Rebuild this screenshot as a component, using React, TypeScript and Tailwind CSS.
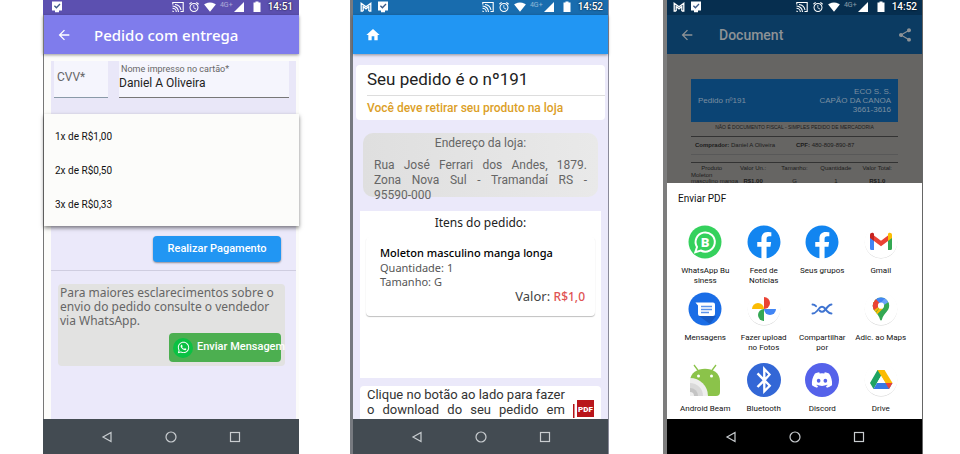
import React from "react";
import { MdAlarm, MdArrowBack, MdHome, MdShare, MdSignalCellular4Bar, MdSignalWifi4Bar } from "react-icons/md";
import { FaBluetoothB, FaDiscord, FaFacebook, FaWhatsapp } from "react-icons/fa";

function CheckMonitorIcon() {
  return (
    <svg viewBox="0 0 12 12" className="size-3">
      <path d="M1 0.5h10v9H8v1.8H4V9.5H1z" fill="#fff" />
      <path d="M3.4 4.8l2 2L9 3" fill="none" stroke="#3d5a86" strokeWidth="1.3" />
    </svg>
  );
}

function MailOutlineIcon() {
  return (
    <svg viewBox="0 0 12 12" className="size-3" fill="none" stroke="#fff" strokeWidth="1.3">
      <path d="M3.2 10H1.2V2.2L6 5.8l4.8-3.6V10H8.8M3.2 10V5.6L6 7.8l2.8-2.2V10" />
    </svg>
  );
}

function CastIcon() {
  return (
    <svg viewBox="0 0 12 12" className="mr-1 size-3" fill="none" stroke="#fff" strokeWidth="1.1">
      <path d="M.8 3.500V1.500h10.400v9H8.500" />
      <path d="M.5 5a6 6 0 0 1 6 6M.5 7.200A3.800 3.800 0 0 1 4.300 11M3 3.500A7 7 0 0 1 9 9" />
      <path d="M.5 9.500A1.500 1.500 0 0 1 2 11H.5z" fill="#fff" stroke="none" />
    </svg>
  );
}

function BatteryIcon() {
  return (
    <svg viewBox="0 0 8 12" className="mr-[7px] ml-1 h-3 w-2">
      <path d="M2.500 0.500h3V1.500H7.500V11H.5V1.500h2z" fill="#fff" />
    </svg>
  );
}

function StatusBar({ time, mail, className }: { time: string; mail?: boolean; className: string }) {
  return (
    <div className={`flex h-[15px] items-center pb-px text-white ${className}`}>
      <div className="flex flex-1 items-center gap-[5px]">
        {mail && <MailOutlineIcon />}
        <CheckMonitorIcon />
      </div>
      <div className="flex items-center">
        <CastIcon />
        <MdAlarm className="mr-1 size-3" />
        <MdSignalWifi4Bar className="mr-1 size-3" />
        <span className="mb-1 text-[7px] leading-none opacity-50">4G+</span>
        <MdSignalCellular4Bar className="mr-1 size-3" />
        <BatteryIcon />
        <span className="text-[10px] leading-3 font-medium [text-shadow:0_0_2px_#000]">{time}</span>
      </div>
    </div>
  );
}

function NavBar({ className }: { className: string }) {
  return (
    <nav className={`flex h-[35px] items-center justify-center gap-[52px] text-[#c9cdd0] ${className}`}>
      <button aria-label="Voltar">
        <svg viewBox="0 0 12 12" className="size-3" fill="none" stroke="currentColor" strokeWidth="1.2">
          <path d="M10 1.5v9L2 6z" />
        </svg>
      </button>
      <button aria-label="Início">
        <svg viewBox="0 0 12 12" className="size-3" fill="none" stroke="currentColor" strokeWidth="1.2">
          <circle cx="6" cy="6" r="5" />
        </svg>
      </button>
      <button aria-label="Recentes">
        <svg viewBox="0 0 12 12" className="size-3" fill="none" stroke="currentColor" strokeWidth="1.2">
          <rect x="1.5" y="1.5" width="9" height="9" />
        </svg>
      </button>
    </nav>
  );
}

function PaymentScreen() {
  return (
    <section className="mr-[51px] flex min-w-0 flex-col">
      <StatusBar time="14:51" className="bg-[#5c50b0] pr-[6px] pl-2" />
      <header className="relative z-10 flex h-[39px] items-center gap-[22px] border-l border-[#777] bg-[#7f7cec] pl-3 text-white shadow-[0_1px_3px_rgba(0,0,0,0.4)]">
        <button aria-label="Voltar">
          <MdArrowBack className="size-4" />
        </button>
        <h1 className="font-['Noto_Sans',sans-serif] text-[15px] leading-5 font-medium">Pedido com entrega</h1>
      </header>
      <main className="flex flex-1 flex-col border-l border-[#777] bg-[#fcfcfa]">
        <form className="mt-[7px] mr-[3px] ml-[7px] flex h-[53px] items-start gap-[11px] bg-[#e9e7f8] pr-[7px] pl-[3px]">
          <label className="flex h-[37px] w-[54px] items-center border-b border-[#8a9aa8] bg-[#f5f5fd] pb-1 pl-[3px] text-[#666]">
            <span className="sr-only">CVV</span>
            <input placeholder="CVV*" className="h-5 w-full text-[12px] leading-5 placeholder:text-[#666] focus:outline-none" />
          </label>
          <label className="flex h-[37px] min-w-0 flex-1 flex-col border-b border-[#777] bg-[#f5f5fd] text-[#222]">
            <span className="mt-[3px] pl-[2px] text-[9px] leading-[10px] text-[#666]">Nome impresso no cartão*</span>
            <input defaultValue="Daniel A Oliveira" className="h-[18px] w-full text-[12px] leading-[18px] focus:outline-none" />
          </label>
        </form>
        <div className="relative z-10 flex flex-col bg-[#fcfcfa] py-[5px] text-[10px] text-[#111] shadow-[0_2px_4px_rgba(0,0,0,0.5)]">
          <button className="h-[34px] pl-[11px] text-left">1x de R$1,00</button>
          <button className="h-[34px] pl-[11px] text-left">2x de R$0,50</button>
          <button className="h-[34px] pl-[11px] text-left">3x de R$0,33</button>
        </div>
        <div className="mr-[3px] ml-[7px] flex flex-1 flex-col bg-[#ebe9fa]">
          <div className="flex justify-end border-b border-[#cfcde0] pt-[10px] pr-[15px] pb-2">
            <button className="h-[26px] w-32 rounded-sm bg-[#2196f3] text-[11px] font-medium text-white shadow-[0_1px_2px_rgba(0,0,0,0.4)]">
              Realizar Pagamento
            </button>
          </div>
          <div className="mt-[13px] mr-[11px] ml-[7px] rounded bg-[#e2e2e1] pt-[2px] pb-1">
            <p className="pl-[2px] font-['Noto_Sans',sans-serif] text-[12px] leading-[14px] whitespace-nowrap text-[#666]">
              Para maiores esclarecimentos sobre o
              <br />
              envio do pedido consulte o vendedor
              <br />
              via WhatsApp.
            </p>
            <div className="mt-[5px] mr-1 flex justify-end">
              <button className="flex h-[29px] w-28 items-center gap-1 rounded bg-[#4caf50] pl-1 text-[11px] font-medium whitespace-nowrap text-white">
                <span className="flex size-5 shrink-0 items-center justify-center rounded-full bg-[#0bc143]">
                  <FaWhatsapp className="size-[13px]" />
                </span>
                Enviar Mensagem
              </button>
            </div>
          </div>
        </div>
      </main>
      <NavBar className="bg-[#434b52]" />
    </section>
  );
}

function OrderScreen() {
  return (
    <section className="mr-[54px] flex min-w-0 flex-col border-r border-l-[3px] border-r-[#8a8a99] border-l-[#777a80]">
      <StatusBar time="14:52" mail className="bg-[#186cae] pr-[5px] pl-[7px]" />
      <header className="relative z-10 flex h-[39px] items-center bg-[#2196f3] pl-3 text-white shadow-[0_1px_3px_rgba(0,0,0,0.4)]">
        <button aria-label="Início">
          <MdHome className="size-4" />
        </button>
      </header>
      <main className="flex flex-1 flex-col bg-[#ebe9fa] pt-[11px]">
        <div className="mx-[3px] rounded bg-white pl-[11px]">
          <h1 className="border-b border-[#ddd] pt-1 pb-[6px] text-[17px] leading-5 text-[#222]">Seu pedido é o nº191</h1>
          <p className="py-1 text-[12px] leading-4 font-medium text-[#dc9f28]">Você deve retirar seu produto na loja</p>
        </div>
        <div className="mx-[10px] mt-[13px] h-16 rounded-[10px] bg-linear-to-r from-[#dfdfdf] to-[#e9e9e9] px-[11px] text-[12px] text-[#666]">
          <h2 className="pt-[3px] text-center leading-[14px]">Endereço da loja:</h2>
          <p className="mt-2 leading-[15px] whitespace-nowrap">
            <span className="block [text-align-last:justify]">Rua José Ferrari dos Andes, 1879.</span>
            <span className="block [text-align-last:justify]">Zona Nova Sul - Tramandaí RS -</span>
            <span className="block">95590-000</span>
          </p>
        </div>
        <div className="mx-[7px] mt-[14px] h-[167px] bg-white px-[6px] pt-1">
          <h2 className="text-center font-['Noto_Sans',sans-serif] text-[12px] leading-4 text-[#222]">Itens do pedido:</h2>
          <article className="mt-[6px] rounded pt-2 pr-[10px] pb-3 pl-[14px] font-['Noto_Sans',sans-serif] shadow-[0_1px_1px_rgba(0,0,0,0.25)]">
            <h3 className="text-[11px] leading-4 font-medium text-black">Moleton masculino manga longa</h3>
            <p className="text-[11px] leading-[14px] text-[#555]">Quantidade: 1</p>
            <p className="text-[11px] leading-[14px] text-[#555]">Tamanho: G</p>
            <p className="text-right text-[13px] leading-[14px] text-[#444]">
              Valor: <span className="text-[12px] font-medium text-[#e05353]">R$1,0</span>
            </p>
          </article>
        </div>
        <div className="mx-[7px] mt-2 flex flex-1 gap-2 rounded-t bg-white pr-[9px] pl-[7px]">
          <p className="flex-1 pt-[1px] text-[13px] leading-[15px] whitespace-nowrap text-[#333]">
            <span className="block [text-align-last:justify]">Clique no botão ao lado para fazer</span>
            <span className="block [text-align-last:justify]">o download do seu pedido em</span>
          </p>
          <button aria-label="Baixar PDF" className="mt-[14px] h-[18px] w-[21px] shrink-0">
            <svg viewBox="0 0 21 18" className="h-[18px] w-[21px]">
              <path d="M0 4h1.5v14H0z" fill="#b31217" />
              <path d="M4 0h17v17H4z" fill="#b9151b" />
              <text x="12.5" y="11.5" textAnchor="middle" fontSize="8" fontWeight="900" fill="#fff" fontFamily="Roboto, sans-serif">PDF</text>
            </svg>
          </button>
        </div>
      </main>
      <NavBar className="bg-[#434b52]" />
    </section>
  );
}

function WhatsAppBusinessLogo() {
  return (
    <svg viewBox="0 0 34 34" className="size-[34px]">
      <circle cx="17" cy="17" r="16.5" fill="#35d15d" />
      <path d="M7.300 27.200l1.700-5.200a9.600 9.600 0 1 1 3.700 3.500z" fill="none" stroke="#fff" strokeWidth="2" />
      <text x="17.2" y="21.5" textAnchor="middle" fontSize="13" fontWeight="900" fill="#fff" fontFamily="Roboto, sans-serif">B</text>
    </svg>
  );
}

function FacebookLogo() {
  return <FaFacebook className="size-[34px] text-[#1285f0]" />;
}

function Plate({ children }: { children: React.ReactNode }) {
  return (
    <svg viewBox="0 0 34 34" className="size-[34px]">
      <circle cx="17" cy="17.2" r="16.2" fill="#d0d0d0" />
      <circle cx="17" cy="16.5" r="16.5" fill="#fff" />
      {children}
    </svg>
  );
}

function GmailLogo() {
  return (
    <Plate>
      <path d="M6 11l4 3v11H7.5A1.5 1.5 0 0 1 6 23.500z" fill="#4285f4" />
      <path d="M28 11l-4 3v11h2.500a1.500 1.500 0 0 0 1.500-1.500z" fill="#34a853" />
      <path d="M10 10.500l7 5.300 7-5.300v5.500l-7 5.300-7-5.300z" fill="#ea4335" />
      <path d="M6 11.500V10c0-2 2.200-2.700 3.500-1.700l.5.500V16l-4-3z" fill="#c5221f" />
      <path d="M28 11.500V10c0-2-2.200-2.700-3.500-1.700l-.5.500V16l4-3z" fill="#fbbc04" />
    </Plate>
  );
}

function MessagesLogo() {
  return (
    <svg viewBox="0 0 34 34" className="size-[34px]">
      <circle cx="17" cy="17" r="16.500" fill="#1a6de6" />
      <path d="M11 24l11 8 6-8z" fill="#1559c4" />
      <path d="M7.500 10.500H25a2 2 0 0 1 2 2v9.500a2 2 0 0 1-2 2H12a2 2 0 0 1-2-2v-8.500z" fill="#fff" />
      <path d="M13 14.500h11M13 17.500h11M13 20.500h8" stroke="#5b93ea" strokeWidth="1.400" />
    </svg>
  );
}

function PhotosLogo() {
  return (
    <Plate>
      <path d="M17 5a6 6 0 0 1 0 12z" fill="#ea4335" />
      <path d="M29 17a6 6 0 0 1-12 0z" fill="#4285f4" />
      <path d="M17 29a6 6 0 0 1 0-12z" fill="#34a853" />
      <path d="M5 17a6 6 0 0 1 12 0z" fill="#fbbc04" />
    </Plate>
  );
}

function NearbyShareLogo() {
  return (
    <svg viewBox="0 0 34 34" className="size-[34px]" fill="none" stroke="#3f74d1" strokeWidth="1.900" strokeLinecap="round">
      <path d="M7.500 21.500c2 0 3.200-1 4.500-2.500l2.500-3c1.500-1.700 3.500-1.700 5 0l3 3.500c1.300 1.400 2.500 2 4 2" />
      <path d="M7.500 12.500c1.600 0 2.600.7 3.500 1.700M14.500 18.500c1.500 1.700 3.500 1.700 5 0l3.500-4c1.200-1.300 2.200-2 3.500-2" />
    </svg>
  );
}

function MapsLogo() {
  return (
    <Plate>
      <clipPath id="map-pin">
        <path d="M17 5.500a8.200 8.200 0 0 1 8.200 8.200c0 5.800-6 7.800-7.200 13.800-.3 1.400-1.700 1.400-2 0-1.200-6-7.200-8-7.200-13.800A8.200 8.200 0 0 1 17 5.500z" />
      </clipPath>
      <g clipPath="url(#map-pin)">
        <path d="M5 5h24v24H5z" fill="#34a853" />
        <path d="M7 22l20-20H7z" fill="#4285f4" />
        <path d="M7 7h4.500L17 13.700 9 23H5z" fill="#fbbc04" />
        <path d="M7 6h4l6 7-7.500 5.500H6z" fill="#ea4335" />
        <path d="M10 23l7-9 2 2.500-7 7z" fill="#fbbc04" />
        <path d="M21 6l5 3-9 6-2-2z" fill="#6ba3f8" />
      </g>
      <circle cx="17" cy="13.700" r="3.100" fill="#fff" />
    </Plate>
  );
}

function AndroidBeamLogo() {
  return (
    <svg viewBox="0 0 34 34" className="size-[34px]">
      <path d="M6 2l4.500 6M28 2l-4.500 6" stroke="#8bc34a" strokeWidth="1.300" />
      <path d="M2 18C2 1.500 32 1.500 32 18v11a4 4 0 0 1-4 4H2z" fill="#8bc34a" />
      <circle cx="10.500" cy="13" r="1.500" fill="#fff" />
      <circle cx="23.500" cy="13" r="1.500" fill="#fff" />
      <path d="M2 15a18 18 0 0 1 18 18H2z" fill="#eeeeee" />
      <path d="M2 20a13 13 0 0 1 13 13H2z" fill="#d9d9d9" />
      <path d="M2 25a8 8 0 0 1 8 8H2z" fill="#c4c4c4" />
      <path d="M2 29a4 4 0 0 1 4 4H2z" fill="#eee" />
    </svg>
  );
}

function DriveLogo() {
  return (
    <Plate>
      <path d="M13.500 7h7L17 13 9.500 26 6 20z" fill="#1ea362" />
      <path d="M13.500 7h7l8 13h-7z" fill="#fbbc04" />
      <path d="M9.500 26L13 20h15.500L25 26z" fill="#3777e3" />
      <path d="M21.500 20h7L25 26z" fill="#ea4335" />
      <path d="M17 13l4 7h-8z" fill="#fff" />
    </Plate>
  );
}

const targets = [
  { label: "WhatsApp Bu\nsiness", icon: <WhatsAppBusinessLogo /> },
  { label: "Feed de\nNotícias", icon: <FacebookLogo /> },
  { label: "Seus grupos", icon: <FacebookLogo /> },
  { label: "Gmail", icon: <GmailLogo /> },
  { label: "Mensagens", icon: <MessagesLogo /> },
  { label: "Fazer upload\nno Fotos", icon: <PhotosLogo /> },
  { label: "Compartilhar\npor", icon: <NearbyShareLogo /> },
  { label: "Adic. ao Maps", icon: <MapsLogo /> },
  { label: "Android Beam", icon: <AndroidBeamLogo /> },
  {
    label: "Bluetooth",
    icon: (
      <span className="flex size-[34px] items-center justify-center rounded-full bg-[#3367d6] text-white">
        <FaBluetoothB className="size-7" />
      </span>
    ),
  },
  {
    label: "Discord",
    icon: (
      <span className="flex size-[34px] items-center justify-center rounded-full bg-[#5562ea] text-white">
        <FaDiscord className="size-[22px]" />
      </span>
    ),
  },
  { label: "Drive", icon: <DriveLogo /> },
];

function ShareScreen() {
  return (
    <section className="flex min-w-0 flex-col border-r border-l-4 border-r-[#666] border-l-[#7d7d7d]">
      <StatusBar time="14:52" mail className="bg-[#062e4f] pr-[5px] pl-[6px]" />
      <header className="flex h-[39px] items-center bg-[#0b3b62] pr-[9px] pl-3 text-[#8d9296]">
        <button aria-label="Voltar">
          <MdArrowBack className="size-4" />
        </button>
        <h1 className="ml-6 flex-1 text-[14px] leading-5 font-medium">Document</h1>
        <button aria-label="Compartilhar">
          <MdShare className="size-4" />
        </button>
      </header>
      <div className="h-[129px] overflow-hidden bg-[#666563] px-6 pt-[25px] font-['Liberation_Sans',sans-serif] text-[6px] leading-[7px] text-[#1c1c1c]">
        <div className="flex h-[43px] items-center justify-between bg-[#0b4474] px-[7px] text-[8px] leading-[9px] text-[#7b8fa0]">
          <p>Pedido nº191</p>
          <p className="text-right">
            ECO S. S.
            <br />
            CAPÃO DA CANOA
            <br />
            3661-3616
          </p>
        </div>
        <p className="border-b border-[#333] pt-[2px] pb-[5px] text-center text-[5px] whitespace-nowrap">
          NÃO É DOCUMENTO FISCAL - SIMPLES PEDIDO DE MERCADORIA
        </p>
        <div className="flex border-b border-[#585858] py-[5px] pl-1">
          <p className="w-[101px]">
            <b>Comprador:</b> Daniel A Oliveira
          </p>
          <p>
            <b>CPF:</b> 480-809-890-87
          </p>
        </div>
        <table className="mt-[7px] w-full table-fixed border-t border-[#333] text-center">
          <thead>
            <tr>
              <th className="pt-[2px] font-normal">Produto</th>
              <th className="pt-[2px] font-normal">Valor Un.:</th>
              <th className="pt-[2px] font-normal">Tamanho:</th>
              <th className="pt-[2px] font-normal">Quantidade</th>
              <th className="pt-[2px] font-normal">Valor Total:</th>
            </tr>
          </thead>
          <tbody className="leading-[6px]">
            <tr className="align-bottom">
              <td className="text-left whitespace-nowrap">
                Moleton
                <br />
                masculino manga
              </td>
              <td className="font-bold">R$1,00</td>
              <td>G</td>
              <td>1</td>
              <td className="font-bold">R$1,0</td>
            </tr>
          </tbody>
        </table>
      </div>
      <main className="flex-1 bg-white pt-[9px]">
        <h2 className="pl-[11px] text-[10px] leading-[14px] text-[#111]">Enviar PDF</h2>
        <div className="mt-[19px] mr-3 ml-[9px] grid grid-cols-4 grid-rows-[67px_71px_auto]">
          {targets.map((t) => (
            <button key={t.label} className="flex flex-col items-center text-[8px] leading-[10px] whitespace-pre text-[#111]">
              {t.icon}
              <span className="mt-[7px]">{t.label}</span>
            </button>
          ))}
        </div>
      </main>
      <NavBar className="bg-black" />
    </section>
  );
}

export default function App() {
  return (
    <div className="grid min-h-[454px] grid-cols-[307fr_313fr_260fr] bg-white pr-[37px] pl-[43px] font-['Roboto',sans-serif]">
      <PaymentScreen />
      <OrderScreen />
      <ShareScreen />
    </div>
  );
}
